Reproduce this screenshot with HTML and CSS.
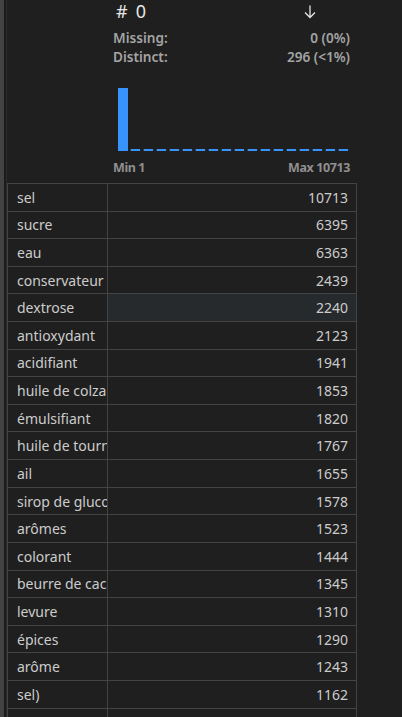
FILE: index.html
```html
<!DOCTYPE html>
<html lang="fr">
<head>
<meta charset="utf-8">
<title>Column summary</title>
<link rel="stylesheet" href="styles.css">
</head>
<body>
<div class="gutter"></div>
<div class="gap"></div>
<main class="panel">
  <section class="summary">
    <div class="title-row">
      <div class="title"><span class="type">#</span><span class="name">0</span></div>
      <svg class="sort-icon" width="14" height="15" viewBox="0 0 14 15" aria-hidden="true">
        <path d="M7 1.5V13.5M2 8.5L7 13.5L12 8.5" fill="none" stroke="#e4e4e4" stroke-width="1.3"/>
      </svg>
    </div>
    <div class="stats">
      <div class="stat"><span>Missing:</span><span>0 (0%)</span></div>
      <div class="stat"><span>Distinct:</span><span>296 (&lt;1%)</span></div>
    </div>
    <svg class="histogram" width="237" height="87" viewBox="0 0 237 87" aria-hidden="true">
      <rect x="5" y="22" width="10" height="63" fill="#3794ff"/>
      <line x1="17.7" y1="84" x2="236" y2="84" stroke="#3794ff" stroke-width="2" stroke-dasharray="9.4 3.6"/>
    </svg>
    <div class="range"><span>Min 1</span><span>Max 10713</span></div>
  </section>
  <table class="values">
    <colgroup><col class="c-name"><col class="c-count"></colgroup>
    <tbody>
      <tr><td>sel</td><td>10713</td></tr>
      <tr><td>sucre</td><td>6395</td></tr>
      <tr><td>eau</td><td>6363</td></tr>
      <tr><td>conservateur</td><td>2439</td></tr>
      <tr class="hover"><td>dextrose</td><td>2240</td></tr>
      <tr><td>antioxydant</td><td>2123</td></tr>
      <tr><td>acidifiant</td><td>1941</td></tr>
      <tr><td>huile de colza</td><td>1853</td></tr>
      <tr><td>émulsifiant</td><td>1820</td></tr>
      <tr><td>huile de tournesol</td><td>1767</td></tr>
      <tr><td>ail</td><td>1655</td></tr>
      <tr><td>sirop de glucose</td><td>1578</td></tr>
      <tr><td>arômes</td><td>1523</td></tr>
      <tr><td>colorant</td><td>1444</td></tr>
      <tr><td>beurre de cacao</td><td>1345</td></tr>
      <tr><td>levure</td><td>1310</td></tr>
      <tr><td>épices</td><td>1290</td></tr>
      <tr><td>arôme</td><td>1243</td></tr>
      <tr><td>sel)</td><td>1162</td></tr>
      <tr><td>Eau</td><td>1109</td></tr>
      <tr><td>lait</td><td>1088</td></tr>
    </tbody>
  </table>
</main>
</body>
</html>
```
FILE: styles.css
```css
html, body {
  margin: 0;
  padding: 0;
  height: 100%;
  overflow: hidden;
  background: #1f1f1f;
}

body {
  display: flex;
  align-items: stretch;
  font-family: "Noto Sans", "Open Sans", sans-serif;
  color: #cccccc;
}

.gutter {
  width: 4px;
  flex: none;
  background: #434343;
}

.gap {
  width: 2px;
  flex: none;
  background: #1b1b1b;
}

.panel {
  flex: 1;
  border-left: 1px solid #2b2b2b;
  display: flex;
  flex-direction: column;
  align-items: flex-start;
}

.summary {
  margin-left: 106px;
  width: 237px;
  display: flex;
  flex-direction: column;
}

.title-row {
  height: 22px;
  display: flex;
  align-items: center;
  justify-content: space-between;
  padding-right: 33px;
}

.title {
  display: flex;
  align-items: center;
  gap: 8px;
  padding-left: 3px;
  font-size: 18px;
  color: #e6e6e6;
  line-height: 22px;
}

.sort-icon {
  display: block;
}

.stats {
  margin-top: 6px;
  display: flex;
  flex-direction: column;
}

.stat {
  display: flex;
  justify-content: space-between;
  font-size: 13.6px;
  font-weight: 600;
  line-height: 19px;
  color: #a4a4a4;
}

.histogram {
  display: block;
}

.range {
  margin-top: 7px;
  display: flex;
  justify-content: space-between;
  font-size: 12.5px;
  font-weight: 700;
  line-height: 16px;
  letter-spacing: -0.4px;
  color: #8f8f8f;
}

.values {
  margin-top: 7px;
  border-collapse: collapse;
  table-layout: fixed;
  width: 350px;
  font-size: 14px;
}

.c-name { width: 100px; }

.values td {
  border: 1px solid #434343;
  height: 25.62px;
  padding: 1px 8px 0;
  white-space: nowrap;
  overflow: hidden;
  line-height: 20px;
}

.values td:first-child {
  padding-left: 9px;
  padding-right: 0;
  text-overflow: clip;
}

.values td:last-child {
  text-align: right;
}

.values tr.hover td:last-child {
  background: #262a2c;
}
```
